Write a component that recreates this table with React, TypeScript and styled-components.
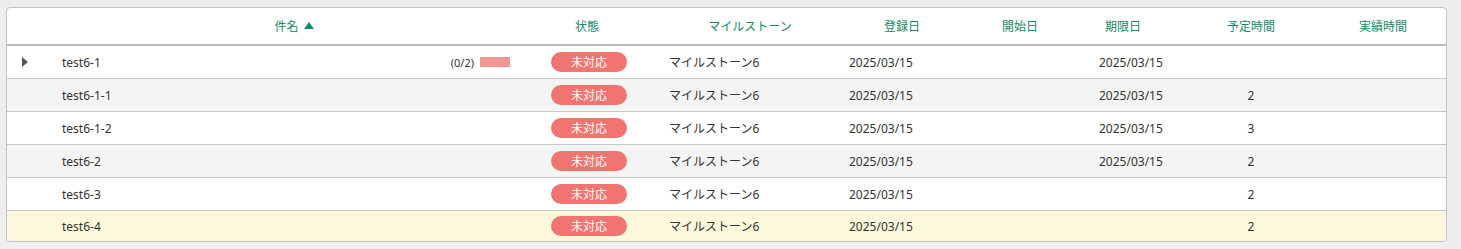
import React from "react";
import styled, { createGlobalStyle } from "styled-components";

const GlobalStyle = createGlobalStyle`
  html, body { margin: 0; padding: 0; background: #eeeeee; }
  body { font-family: "Noto Sans", "Noto Sans CJK JP", sans-serif; font-size: 12px; color: #333; }
`;

const COLS = "46px 461px 146px 180px 124px 112px 94px 162px 1fr";

const Page = styled.div`
  padding: 7px 14px 7px 6px;
`;

const Card = styled.div`
  background: #fff;
  border: 1px solid #c2c2c2;
  border-radius: 4px;
  overflow: hidden;
`;

const HeaderRow = styled.div`
  display: grid;
  grid-template-columns: ${COLS};
  height: 35px;
  padding-bottom: 1px;
  border-bottom: 2px solid #bcbcbc;
  align-items: center;
`;

const HeadCell = styled.div<{ $pl?: number; $pr?: number }>`
  display: flex;
  justify-content: center;
  align-items: center;
  gap: 5px;
  padding-left: ${(p) => p.$pl ?? 0}px;
  padding-right: ${(p) => p.$pr ?? 0}px;
  color: #17876b;
  font-size: 12px;
  white-space: nowrap;
`;

const SortArrow = styled.span`
  width: 0;
  height: 0;
  border-left: 5px solid transparent;
  border-right: 5px solid transparent;
  border-bottom: 7px solid #17876b;
  margin-top: -1px;
`;

const Row = styled.div<{ $bg: string; $last?: boolean }>`
  display: grid;
  grid-template-columns: ${COLS};
  height: ${(p) => (p.$last ? 30 : 32)}px;
  background: ${(p) => p.$bg};
  border-bottom: ${(p) => (p.$last ? "none" : "1px solid #c8c8c8")};
  align-items: center;
`;

const Cell = styled.div<{ $pl?: number; $center?: boolean }>`
  display: flex;
  align-items: center;
  justify-content: ${(p) => (p.$center ? "center" : "flex-start")};
  padding-left: ${(p) => p.$pl ?? 0}px;
  white-space: nowrap;
  color: #333;
  font-size: 12px;
`;

const NameCell = styled.div`
  display: flex;
  align-items: center;
  justify-content: space-between;
  padding-left: 9px;
  padding-right: 4px;
`;

const Toggle = styled.span`
  width: 0;
  height: 0;
  border-top: 5px solid transparent;
  border-bottom: 5px solid transparent;
  border-left: 6px solid #555;
  margin-left: 15px;
`;

const Progress = styled.div`
  display: flex;
  align-items: center;
  gap: 6px;
  font-size: 11px;
  color: #333;
`;

const Bar = styled.span`
  width: 30px;
  height: 10px;
  background: #f29590;
`;

const Badge = styled.span`
  display: inline-flex;
  align-items: center;
  justify-content: center;
  width: 76px;
  height: 20px;
  border-radius: 10px;
  background: #f07470;
  color: #fff;
  font-size: 12px;
  margin-left: 4px;
`;

type Item = {
  name: string;
  expandable?: boolean;
  progress?: string;
  due?: string;
  plan?: string;
  bg: string;
};

const items: Item[] = [
  { name: "test6-1", expandable: true, progress: "(0/2)", due: "2025/03/15", bg: "#ffffff" },
  { name: "test6-1-1", due: "2025/03/15", plan: "2", bg: "#f4f4f4" },
  { name: "test6-1-2", due: "2025/03/15", plan: "3", bg: "#ffffff" },
  { name: "test6-2", due: "2025/03/15", plan: "2", bg: "#f4f4f4" },
  { name: "test6-3", plan: "2", bg: "#ffffff" },
  { name: "test6-4", plan: "2", bg: "#fcf8dc" },
];

export default function App() {
  return (
    <>
      <GlobalStyle />
      <Page>
        <Card>
          <HeaderRow>
            <HeadCell />
            <HeadCell $pl={21}>
              件名
              <SortArrow />
            </HeadCell>
            <HeadCell>状態</HeadCell>
            <HeadCell>マイルストーン</HeadCell>
            <HeadCell>登録日</HeadCell>
            <HeadCell>開始日</HeadCell>
            <HeadCell>期限日</HeadCell>
            <HeadCell>予定時間</HeadCell>
            <HeadCell $pr={12}>実績時間</HeadCell>
          </HeaderRow>
          {items.map((it, i) => (
            <Row key={it.name} $bg={it.bg} $last={i === items.length - 1}>
              <Cell>{it.expandable && <Toggle />}</Cell>
              <NameCell>
                <span>{it.name}</span>
                {it.progress && (
                  <Progress>
                    {it.progress}
                    <Bar />
                  </Progress>
                )}
              </NameCell>
              <Cell $center>
                <Badge>未対応</Badge>
              </Cell>
              <Cell $pl={9}>マイルストーン6</Cell>
              <Cell $pl={9}>2025/03/15</Cell>
              <Cell />
              <Cell $pl={23}>{it.due}</Cell>
              <Cell $center>{it.plan}</Cell>
              <Cell />
            </Row>
          ))}
        </Card>
      </Page>
    </>
  );
}
